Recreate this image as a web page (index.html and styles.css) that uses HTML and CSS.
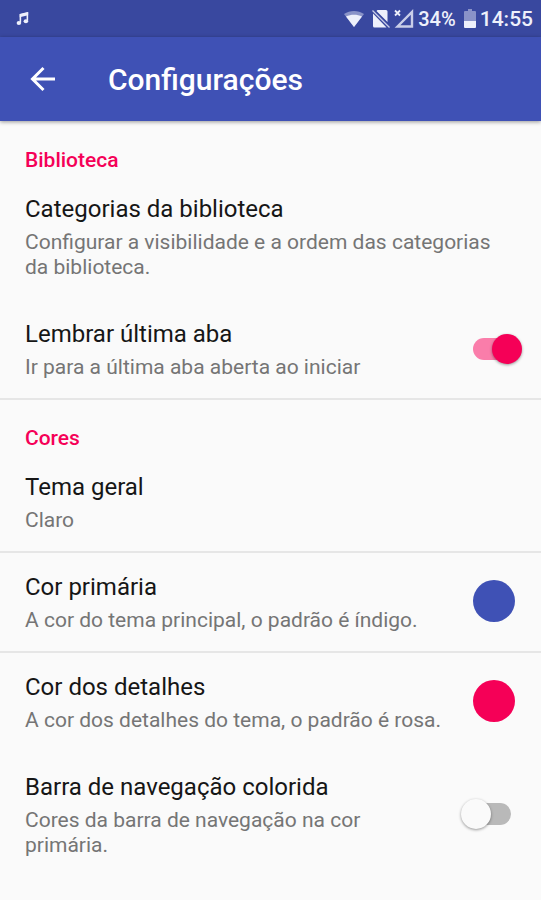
FILE: index.html
```
<!DOCTYPE html>
<html lang="pt-BR">
<head>
  <meta charset="UTF-8">
  <meta name="viewport" content="width=device-width, initial-scale=1.0">
  <title>Configurações</title>
  <link rel="stylesheet" href="styles.css">
</head>
<body>
  <div class="status-bar">
    <svg width="14" height="14" viewBox="0 0 16 16">
      <path d="M5 12V3l8-2v9" fill="none" stroke="currentColor" stroke-width="1.8"/>
      <path d="M4.200 2.600l9.700-2.200v3.400l-9.700 2.200z" fill="currentColor"/>
      <ellipse cx="3.300" cy="12.600" rx="2.600" ry="2.200" fill="currentColor"/>
      <ellipse cx="11.300" cy="10.600" rx="2.600" ry="2.200" fill="currentColor"/>
    </svg>
    <div class="status-icons">
      <svg class="wifi" width="20" height="18" viewBox="0 0 20 18">
        <path d="M0 4C6 0 14 0 20 4L10 17z" fill="currentColor" opacity="0.45"/>
        <path d="M2 6.500C7 4 13 4 18 6.500L10 17z" fill="currentColor"/>
      </svg>
      <svg width="18" height="20" viewBox="0 0 18 20">
        <path d="M5.500 1H14q1.500 0 1.500 1.500V13L4.500 2zM1 4.500L14.500 18.500H2.500Q1 18.500 1 17z" fill="currentColor"/>
        <path d="M0.500 1.500l17 17" stroke="currentColor" stroke-width="1.200" opacity="0.8"/>
      </svg>
      <svg width="20" height="20" viewBox="0 0 20 20">
        <path d="M3.500 17.500L18 3v14.500z" fill="none" stroke="currentColor" stroke-width="2.400" opacity="0.8"/>
        <path d="M1 1.500l5 5M6 1.500l-5 5" stroke="currentColor" stroke-width="1.800"/>
      </svg>
      <span class="percent">34%</span>
      <svg width="12" height="20" viewBox="0 0 12 20">
        <path d="M4 0h4v2h3q1 0 1 1v9H0V3q0-1 1-1h3z" fill="currentColor" opacity="0.45"/>
        <path d="M0 12h12v6q0 1-1 1H1q-1 0-1-1z" fill="currentColor"/>
      </svg>
      <span class="clock">14:55</span>
    </div>
  </div>

  <header class="app-bar">
    <button class="back" type="button" aria-label="Voltar">
      <svg width="26" height="26" viewBox="0 0 26 26">
        <path d="M25 13H3M13.500 2L2.500 13l11 11" fill="none" stroke="currentColor" stroke-width="3"/>
      </svg>
    </button>
    <h1>Configurações</h1>
  </header>

  <main>
    <section>
      <h2>Biblioteca</h2>
      <button class="item" type="button">
        <span class="text">
          <span class="title">Categorias da biblioteca</span>
          <span class="summary">Configurar a visibilidade e a ordem das categorias da biblioteca.</span>
        </span>
      </button>
      <label class="item" for="lastTab">
        <span class="text">
          <span class="title">Lembrar última aba</span>
          <span class="summary">Ir para a última aba aberta ao iniciar</span>
        </span>
        <input class="switch" type="checkbox" id="lastTab" checked>
      </label>
    </section>

    <section>
      <h2>Cores</h2>
      <button class="item" type="button">
        <span class="text">
          <span class="title">Tema geral</span>
          <span class="summary">Claro</span>
        </span>
      </button>
      <button class="item divided" type="button">
        <span class="text">
          <span class="title">Cor primária</span>
          <span class="summary">A cor do tema principal, o padrão é índigo.</span>
        </span>
        <span class="swatch primary"></span>
      </button>
      <button class="item divided" type="button">
        <span class="text">
          <span class="title">Cor dos detalhes</span>
          <span class="summary">A cor dos detalhes do tema, o padrão é rosa.</span>
        </span>
        <span class="swatch accent"></span>
      </button>
      <label class="item" for="navBar">
        <span class="text">
          <span class="title">Barra de navegação colorida</span>
          <span class="summary">Cores da barra de navegação na cor primária.</span>
        </span>
        <input class="switch" type="checkbox" id="navBar">
      </label>
    </section>
  </main>
</body>
</html>
```
FILE: styles.css
```
* {
  box-sizing: border-box;
}

body {
  margin: 0;
  background-color: #fafafa;
  color: #161616;
  font-family: Roboto, "Noto Sans", sans-serif;
}

.status-bar {
  display: flex;
  align-items: center;
  justify-content: space-between;
  height: 37px;
  padding: 0 8px 0 16px;
  background-color: #39489f;
  color: #eef0fb;
}

.status-icons {
  display: flex;
  align-items: center;
  gap: 4px;
  font-weight: 500;
}

.wifi {
  margin-right: 4px;
}

.percent {
  margin-right: 4px;
  font-size: 20px;
}

.clock {
  font-size: 21px;
}

.app-bar {
  display: flex;
  align-items: center;
  height: 84px;
  padding: 0 25px;
  gap: 52px;
  background-color: #3f51b5;
  color: #fff;
  box-shadow: 0 1px 4px rgba(0, 0, 0, 0.4);
}

.back {
  display: flex;
  padding: 0 0 0 5px;
  margin: 0;
  border: none;
  background: none;
  color: inherit;
  cursor: pointer;
}

h1 {
  margin: 0;
  font-size: 30px;
  font-weight: 500;
}

h2 {
  margin: 0;
  padding: 27px 25px 2px;
  font-size: 21px;
  line-height: 24px;
  font-weight: 500;
  color: #f50057;
}

section + section,
.divided {
  box-shadow: 0 -1px #e6e6e6, inset 0 1px #e6e6e6;
}

.item {
  display: flex;
  align-items: center;
  justify-content: space-between;
  gap: 24px;
  width: 100%;
  padding: 20px 26px 19px 25px;
  border: none;
  background: none;
  color: inherit;
  font: inherit;
  text-align: left;
  cursor: pointer;
}

.text {
  display: flex;
  flex-direction: column;
  gap: 6px;
}

.title {
  font-size: 24px;
  line-height: 30px;
}

.summary {
  font-size: 21px;
  line-height: 25px;
  color: #757575;
}

.swatch {
  flex: none;
  width: 42px;
  height: 42px;
  margin-bottom: 3px;
  border-radius: 50%;
}

.primary {
  background-color: #3f51b5;
}

.accent {
  background-color: #f50057;
}

.switch {
  appearance: none;
  flex: none;
  position: relative;
  width: 61px;
  height: 32px;
  margin: 0 -7px 0 0;
  cursor: pointer;
}

.switch::before {
  content: "";
  position: absolute;
  top: 4px;
  left: 12px;
  width: 38px;
  height: 22px;
  border-radius: 11px;
  background-color: #b9b9b9;
}

.switch::after {
  content: "";
  position: absolute;
  top: 0;
  left: 0;
  width: 30px;
  height: 30px;
  border-radius: 50%;
  background-color: #fafafa;
  box-shadow: 0 1px 3px rgba(0, 0, 0, 0.4);
}

.switch:checked::before {
  background-color: #fa7daa;
}

.switch:checked::after {
  left: 31px;
  background-color: #f50057;
}
```
